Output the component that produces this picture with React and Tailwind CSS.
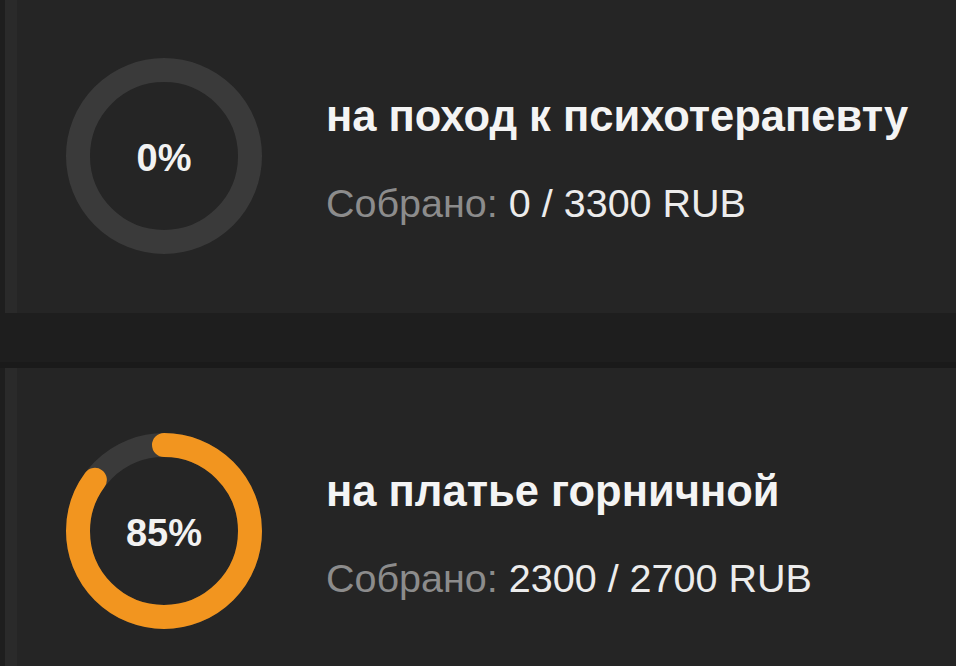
import React from 'react';

const goals = [
    { title: 'на поход к психотерапевту', raised: 0, target: 3300, pad: 'pt-[58px] pb-[59px]' },
    { title: 'на платье горничной', raised: 2300, target: 2700, pad: 'pt-[65px] pb-[60px]' },
];

const Ring = ({ percent }) => {
    const r = 86;
    const len = 2 * Math.PI * r;
    return (
        <div className="relative w-[196px] h-[196px] shrink-0">
            <svg width="196" height="196" viewBox="0 0 196 196" className="-rotate-90">
                <circle cx="98" cy="98" r={r} fill="none" stroke="#3a3a3a" strokeWidth="24" />
                {percent > 0 && (
                    <circle
                        cx="98"
                        cy="98"
                        r={r}
                        fill="none"
                        stroke="#f2951f"
                        strokeWidth="24"
                        strokeLinecap="round"
                        strokeDasharray={`${(len * percent) / 100} ${len}`}
                    />
                )}
            </svg>
            <div className="absolute inset-0 flex items-center justify-center text-[38px] font-bold text-[#f2f2f2] pt-[4px]">
                {percent}%
            </div>
        </div>
    );
};

const GoalCard = ({ goal }) => {
    const percent = Math.floor((goal.raised / goal.target) * 100);
    return (
        <div className={`bg-[#252525] border-l-[12px] border-[#2a2a2a] ml-[5px] flex items-start gap-[64px] pl-[49px] ${goal.pad}`}>
            <Ring percent={percent} />
            <div className="mt-[34px] flex flex-col">
                <h2 className="text-[43.5px] leading-[48px] font-bold text-[#f4f4f4]">{goal.title}</h2>
                <p className="mt-[40px] text-[39.5px] leading-[46px] text-[#ececec]">
                    <span className="text-[#8c8c8c]">Собрано:</span> {goal.raised} / {goal.target} RUB
                </p>
            </div>
        </div>
    );
};

export default function App() {
    return (
        <div className="min-h-screen w-[956px] h-[666px] overflow-hidden bg-[#1e1e1e] font-['Liberation_Sans',Arial,sans-serif]">
            <GoalCard goal={goals[0]} />
            <div className="h-[55px] border-b-[6px] border-[#1a1a1a]" />
            <GoalCard goal={goals[1]} />
        </div>
    );
}
